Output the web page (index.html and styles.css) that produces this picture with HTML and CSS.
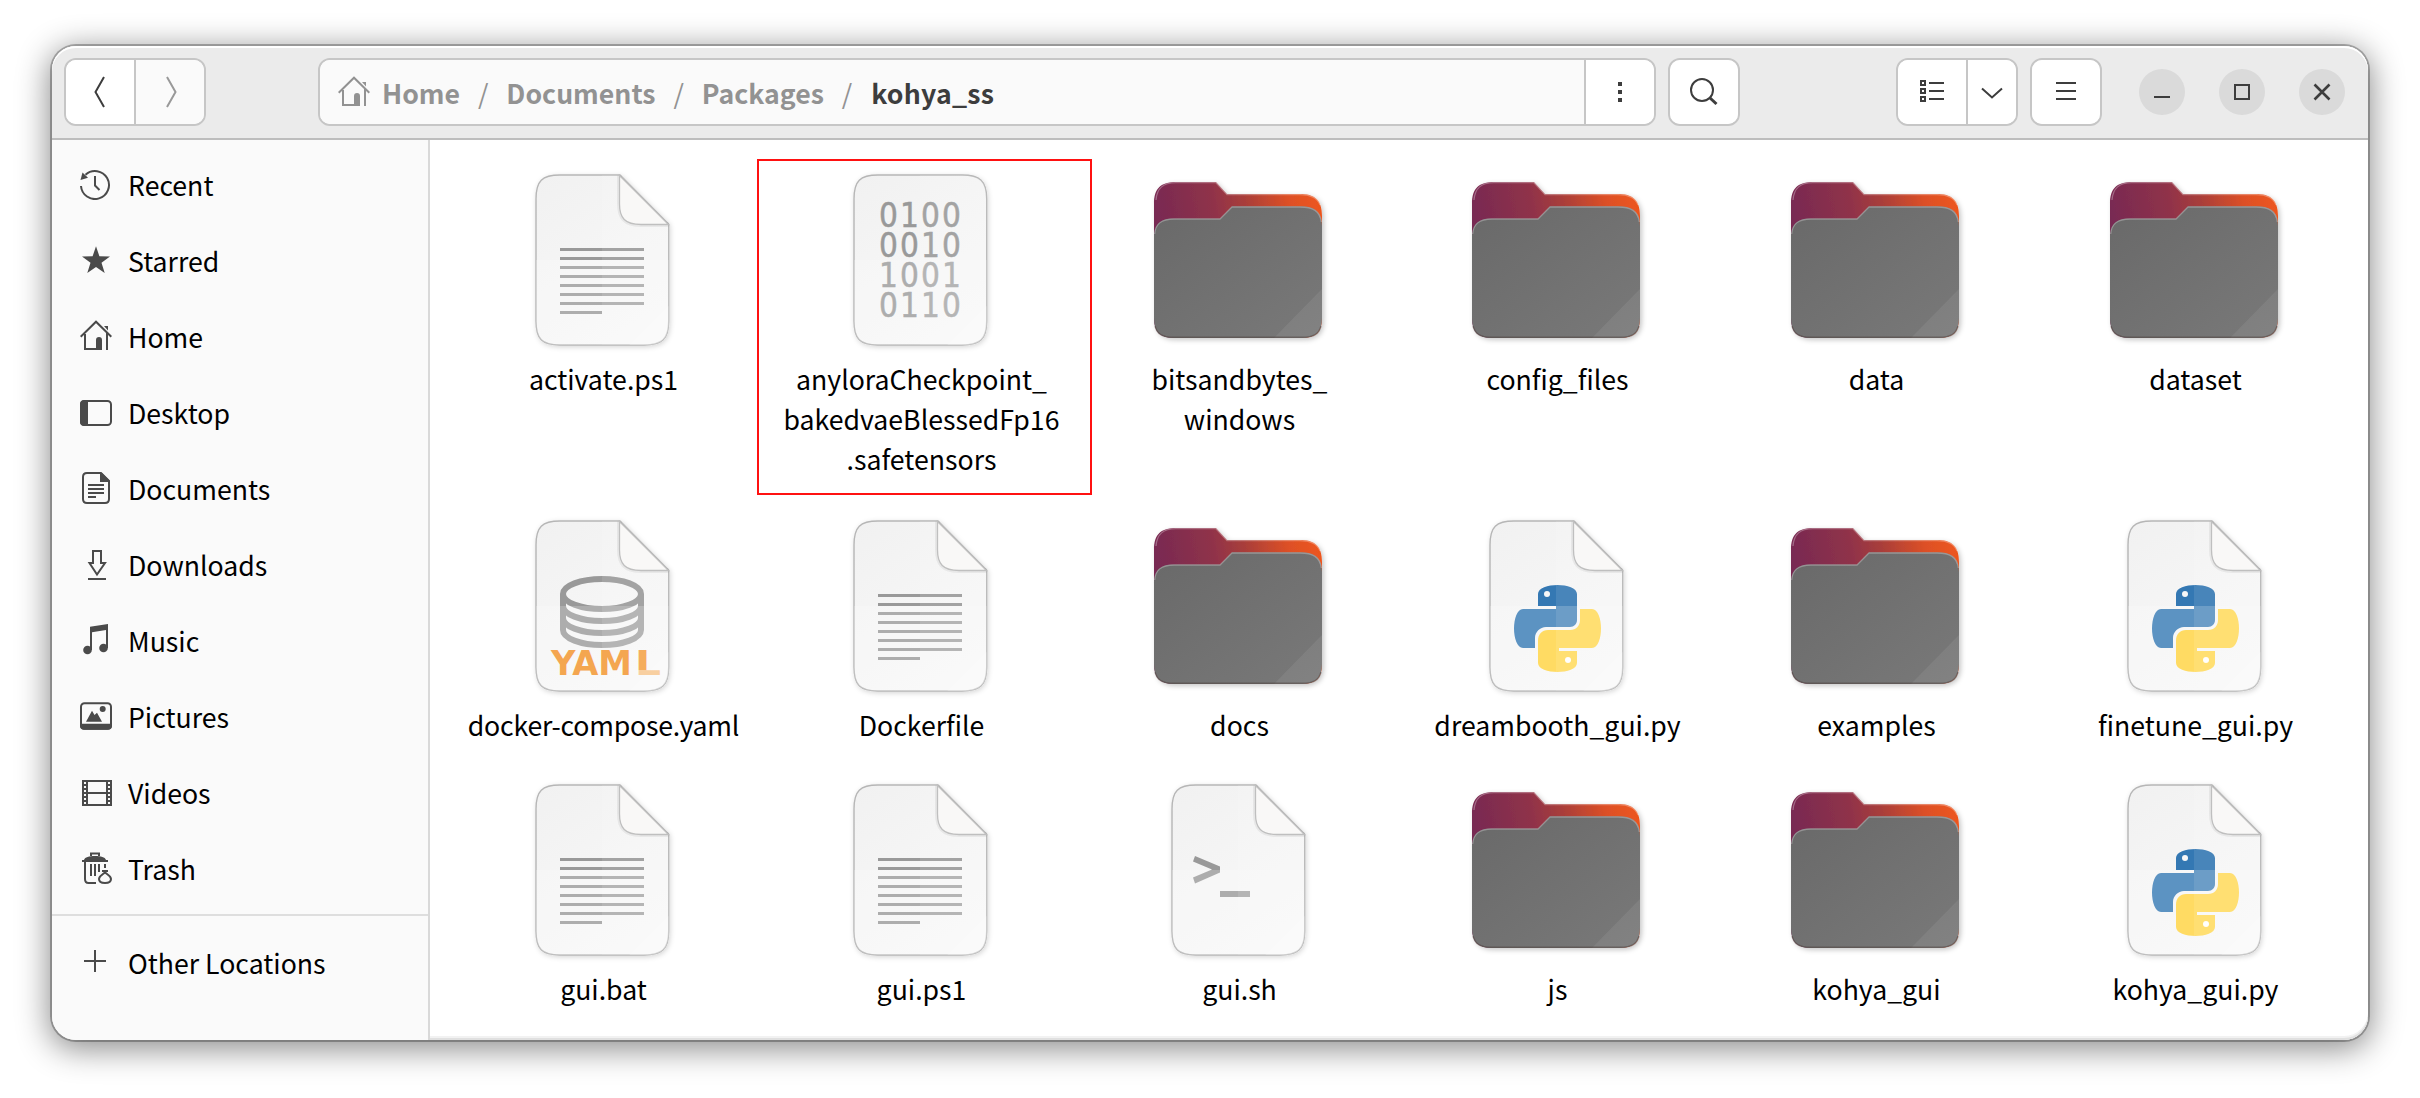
FILE: index.html
```html
<!DOCTYPE html>
<html lang="en">
<head>
<meta charset="utf-8">
<title>kohya_ss</title>
<link rel="stylesheet" href="styles.css">
</head>
<body>
<svg class="sprite" width="0" height="0" aria-hidden="true">
  <defs>
    <linearGradient id="paper" x1="0" y1="0" x2="0.5" y2="1">
      <stop offset="0" stop-color="#f1f1f1"/><stop offset="1" stop-color="#f8f8f8"/>
    </linearGradient>
    <linearGradient id="folder-back" x1="12" y1="62" x2="180" y2="30" gradientUnits="userSpaceOnUse">
      <stop offset="0" stop-color="#772953"/><stop offset=".36" stop-color="#8f324a"/><stop offset=".55" stop-color="#a93e3a"/><stop offset=".8" stop-color="#dd5026"/><stop offset="1" stop-color="#ee561e"/>
    </linearGradient>
    <linearGradient id="folder-front" x1="0" y1="0" x2="1" y2="1">
      <stop offset="0" stop-color="#696969"/><stop offset="1" stop-color="#797979"/>
    </linearGradient>
    <linearGradient id="yaml-l" x1="0" y1="141" x2="0" y2="165" gradientUnits="userSpaceOnUse">
      <stop offset=".8" stop-color="#f5ad5e"/><stop offset=".8" stop-color="#f8cfa0"/>
    </linearGradient>
    <filter id="soft" x="-10%" y="-10%" width="125%" height="125%">
      <feDropShadow dx="1" dy="1.5" stdDeviation="2.5" flood-color="#000" flood-opacity=".16"/>
    </filter>
    <filter id="folder-soft" x="-10%" y="-10%" width="125%" height="125%">
      <feDropShadow dx="2" dy="2" stdDeviation="2.5" flood-color="#000" flood-opacity=".22"/>
    </filter>
    <clipPath id="page-clip"><path d="M114 11H54C36 11 30 17 30 35V157C30 175 36 181 54 181H138C156 181 162.700 175 162.700 157V60Z"/></clipPath>
    <clipPath id="sheet-clip"><path d="M54 11H138C156 11 162.700 17 162.700 35V157C162.700 175 156 181 138 181H54C36 181 30 175 30 157V35C30 17 36 11 54 11Z"/></clipPath>
  </defs>

  <symbol id="sheen" viewBox="0 0 192 192">
    <path d="M96 0H192V192H96Z" fill="#fff" opacity=".1"/>
    <path d="M0 96H192V192H0Z" fill="#fff" opacity=".2"/>
    <path d="M192 113 112 192H192Z" fill="#fff" opacity=".2"/>
  </symbol>

  <symbol id="page" viewBox="0 0 192 192">
    <path d="M114 11H54C36 11 30 17 30 35V157C30 175 36 181 54 181H138C156 181 162.700 175 162.700 157V60Z" fill="url(#paper)" stroke="#b6b6b6" stroke-width="1.400" filter="url(#soft)"/>
    <path d="M113.500 11.500V40C113.500 54 119 60.500 135 60.500H162.500" fill="none" stroke="#000" stroke-opacity=".06" stroke-width="5"/>
    <path d="M113.500 11.500V40C113.500 54 119 60.500 135 60.500H162.500Z" fill="#f9f8f7" stroke="#b8b8b8" stroke-width="1.300"/>
  </symbol>

  <symbol id="text-file" viewBox="0 0 192 192">
    <use href="#page"/>
    <path d="M54 85.500H138M54 94.500H138M54 103.500H138M54 112.500H138M54 121.500H138M54 130.500H138M54 139.500H138M54 148.500H96" stroke="#999" stroke-width="3"/>
    <use href="#sheen" clip-path="url(#page-clip)"/>
  </symbol>

  <symbol id="shell-file" viewBox="0 0 192 192">
    <use href="#page"/>
    <path d="M53 82 78 92.500V98.500L53 109.500 51 103.500 70 95.500 51 87.500ZM78 117H108V123H78Z" fill="#999"/>
    <use href="#sheen" clip-path="url(#page-clip)"/>
  </symbol>

  <symbol id="python-file" viewBox="0 0 192 192">
    <use href="#page"/>
    <path d="M78 96V84C78 78 88 75 97.500 75S117 78 117 84V110C117 114 114 117 110 117H86C80 117 75 122 75 128V138H63C57 138 54 128 54 118.500S57 99 63 99H96V96Z" fill="#3478b3"/>
    <path d="M120 99H132C138 99 141 109 141 118.500S138 138 132 138H99V141H117V153C117 159 107 162 97.500 162S78 159 78 153V131C78 124 82 120 88 120H110C116 120 120 116 120 110Z" fill="#ffd33c"/>
    <circle cx="87" cy="84" r="3" fill="#f7f7f7"/><circle cx="108" cy="150" r="3" fill="#fff"/>
    <use href="#sheen" clip-path="url(#page-clip)"/>
  </symbol>

  <symbol id="folder" viewBox="0 0 192 192">
    <path d="M12 80V40C12 24 19 18 34 18H74L85 30H158C172 30 180 35 180 52V154C180 168 174 174 160 174H32C18 174 12 168 12 154Z" fill="url(#folder-back)" filter="url(#folder-soft)"/>
    <path d="M14 36C15 24 21 18.700 34 18.700H74L85 30.700H158C168 30.700 175 33 178 41" fill="none" stroke="#fff" stroke-opacity=".3" stroke-width="1.300"/>
    <path d="M12 74C12 60 18 54.500 32 54.500H78L90 42.300H158C172 42.300 180 47 180 62V154C180 168 174 174 160 174H32C18 174 12 168 12 154Z" fill="url(#folder-front)"/>
    <path d="M12.700 70C13.500 60 19 55 32 55H78L90 43H158C171 43 178 47 179.300 58" fill="none" stroke="#fff" stroke-opacity=".28" stroke-width="1.300"/>
    <path d="M180 125V154C180 168 174 174 160 174H132Z" fill="#fff" opacity=".07"/>
    <path d="M13 162C15 170 20 173.300 32 173.300H160C172 173.300 177 170 179 162" fill="none" stroke="#4a3a36" stroke-opacity=".45" stroke-width="1.400"/>
  </symbol>

  <symbol id="home" viewBox="0 0 32 32">
    <path d="M.7 16.700 16 1.700 31.300 16.700M5 14V29H17M27 13V30" fill="none" stroke="currentColor" stroke-width="2"/>
    <path d="M16 30V20C16 18 17 17 19 17S22 18 22 20V30ZM24 6H28V10.500Z" fill="currentColor"/>
  </symbol>
</svg>

<main class="window">
  <header class="headerbar">
    <div class="group nav">
      <button class="btn"><svg width="32" height="32" viewBox="0 0 32 32"><path d="M20 1 11.500 16 20 31" class="line"/></svg></button>
      <button class="btn disabled"><svg width="32" height="32" viewBox="0 0 32 32"><path d="M13 1 21.500 16 13 31" class="line"/></svg></button>
    </div>
    <div class="group pathbar">
      <nav class="crumbs">
        <svg class="crumb-home" width="32" height="32"><use href="#home"/></svg>
        <span class="crumb">Home</span><span class="sep">/</span>
        <span class="crumb">Documents</span><span class="sep">/</span>
        <span class="crumb">Packages</span><span class="sep">/</span>
        <span class="crumb current">kohya_ss</span>
      </nav>
      <button class="btn"><svg width="32" height="32" viewBox="0 0 32 32"><path d="M14 6h4v4h-4zM14 14h4v4h-4zM14 22h4v4h-4z" fill="currentColor"/></svg></button>
    </div>
    <div class="group search">
      <button class="btn"><svg width="32" height="32" viewBox="0 0 32 32"><circle cx="14" cy="14" r="11" class="line"/><path d="M21.500 21.500 28.500 28" class="line thick"/></svg></button>
    </div>
    <div class="group view">
      <button class="btn"><svg width="32" height="32" viewBox="0 0 32 32"><path d="M5 5h4v4h-4zM5 13h4v4h-4zM5 21h4v4h-4zM13 7H28M13 15H28M13 23H28" class="line"/></svg></button>
      <button class="btn narrow"><svg width="32" height="32" viewBox="0 0 32 32"><path d="M6 12.500 16 21.500 26 12.500" class="line"/></svg></button>
    </div>
    <div class="group menu">
      <button class="btn"><svg width="32" height="32" viewBox="0 0 32 32"><path d="M6 7H26M6 15H26M6 23H26" class="line"/></svg></button>
    </div>
    <div class="controls">
      <button class="ctl"><svg width="32" height="32" viewBox="0 0 32 32"><path d="M8 21H24" class="line"/></svg></button>
      <button class="ctl"><svg width="32" height="32" viewBox="0 0 32 32"><path d="M9 9H23V23H9Z" class="line"/></svg></button>
      <button class="ctl"><svg width="32" height="32" viewBox="0 0 32 32"><path d="M8.500 8.500 23.500 23.500M23.500 8.500 8.500 23.500" class="line close"/></svg></button>
    </div>
  </header>

  <div class="body">
    <aside class="sidebar">
      <ul class="places">
        <li class="place"><svg width="32" height="32" viewBox="0 0 32 32"><path d="M1 18A14 14 0 1 0 5.500 6.700M15 8V17.500L19.500 22" class="line"/><path d="M.5 12 2.500 4.500 8 9.700Z" fill="currentColor"/></svg><span>Recent</span></li>
        <li class="place"><svg width="32" height="32" viewBox="0 0 32 32"><path d="M16 2.300 19.400 12.300 30 12.500 21.500 18.800 24.700 29 16 23 7.300 29 10.500 18.800 2 12.500 12.600 12.300Z" fill="currentColor"/></svg><span>Starred</span></li>
        <li class="place"><svg width="32" height="32"><use href="#home"/></svg><span>Home</span></li>
        <li class="place"><svg width="32" height="32" viewBox="0 0 32 32"><rect x="1" y="5" width="30" height="24" rx="3.500" class="line"/><path d="M8 4H4.500C1.500 4 0 5.500 0 8V26C0 28.500 1.500 30 4.500 30H8Z" fill="currentColor"/></svg><span>Desktop</span></li>
        <li class="place"><svg width="32" height="32" viewBox="0 0 32 32"><path d="M21 1H7C4.500 1 3 2.500 3 5V27C3 29.500 4.500 31 7 31H25C27.500 31 29 29.500 29 27V9ZM8 13H24M8 17H24M8 21H24M8 25H16" class="line"/><path d="M20 1H22L30 9V10H20Z" fill="currentColor"/></svg><span>Documents</span></li>
        <li class="place"><svg width="32" height="32" viewBox="0 0 32 32"><path d="M13 15V3H21V15H25L17 26.500 9.500 15ZM8 31H26" class="line"/></svg><span>Downloads</span></li>
        <li class="place"><svg width="32" height="32" viewBox="0 0 32 32"><path d="M10 2.700 28 0V24H26V6L12 8.300V26H10Z" fill="currentColor"/><circle cx="7.500" cy="26" r="4.300" fill="currentColor"/><circle cx="23.500" cy="24" r="4.300" fill="currentColor"/></svg><span>Music</span></li>
        <li class="place"><svg width="32" height="32" viewBox="0 0 32 32"><rect x="1" y="3.300" width="30" height="25.500" rx="3.500" class="line"/><path d="M0 23.700H32V26C32 28.500 30.500 29.700 28 29.700H4C1.500 29.700 0 28.500 0 26ZM6 21.700 12 10.700 14.500 15 17 12.700 22 21.700Z" fill="currentColor"/><circle cx="22.700" cy="9" r="3" fill="currentColor"/></svg><span>Pictures</span></li>
        <li class="place"><svg width="32" height="32" viewBox="0 0 32 32"><path d="M3 4V30M7 4V30M27 4V30M31 4V30M3 5H31M7 17H27M3 29H31M3 9H7M3 13H7M3 17H7M3 21H7M3 25H7M27 9H31M27 13H31M27 17H31M27 21H31M27 25H31" class="line"/></svg><span>Videos</span></li>
        <li class="place"><svg width="32" height="32" viewBox="0 0 32 32"><path d="M11 4V1.500H19V4M5 9V27C5 29.500 6 31 8.500 31H16M11 12V24M15 12V24M19 12V20M25 12V16" class="line"/><path d="M2 8H28V10H2ZM4 8C5 5 9 4 15 4S25 5 26 8ZM22 18H28V20H26.500L25 22 23.500 20H22Z" fill="currentColor"/><path d="M25 20.500C22 23 19 24 19 27S21 31 25 31 31 30 31 27 28 23 25 20.500Z" class="line"/></svg><span>Trash</span></li>
      </ul>
      <ul class="places other">
        <li class="place"><svg width="32" height="32" viewBox="0 0 32 32"><path d="M15 4V26M4 15H26" class="line"/></svg><span>Other Locations</span></li>
      </ul>
    </aside>

    <section class="files">
      <figure class="file"><svg class="icon"><use href="#text-file"/></svg><figcaption>activate.ps1</figcaption></figure>
      <figure class="file marked">
        <svg class="icon" viewBox="0 0 192 192">
          <path d="M54 11H138C156 11 162.700 17 162.700 35V157C162.700 175 156 181 138 181H54C36 181 30 175 30 157V35C30 17 36 11 54 11Z" fill="url(#paper)" stroke="#b6b6b6" stroke-width="1.400" filter="url(#soft)"/>
          <g class="bits">
            <text x="64.500 85.500 106.500 127.500" y="63">0100</text>
            <text x="64.500 85.500 106.500 127.500" y="93">0010</text>
            <text x="64.500 85.500 106.500 127.500" y="123">1001</text>
            <text x="64.500 85.500 106.500 127.500" y="153">0110</text>
          </g>
          <use href="#sheen" clip-path="url(#sheet-clip)"/>
        </svg>
        <figcaption>anyloraCheckpoint_<br>bakedvaeBlessedFp16<br>.safetensors</figcaption>
      </figure>
      <figure class="file"><svg class="icon"><use href="#folder"/></svg><figcaption>bitsandbytes_<br>windows</figcaption></figure>
      <figure class="file"><svg class="icon"><use href="#folder"/></svg><figcaption>config_files</figcaption></figure>
      <figure class="file"><svg class="icon"><use href="#folder"/></svg><figcaption>data</figcaption></figure>
      <figure class="file"><svg class="icon"><use href="#folder"/></svg><figcaption>dataset</figcaption></figure>

      <figure class="file">
        <svg class="icon" viewBox="0 0 192 192">
          <use href="#page"/>
          <g fill="none" stroke="#999" stroke-width="6">
            <ellipse cx="96" cy="84" rx="39" ry="15"/>
            <path d="M57 84V120A39 15 0 0 0 135 120V84M57 96A39 15 0 0 0 135 96M57 108A39 15 0 0 0 135 108"/>
          </g>
          <use href="#sheen" clip-path="url(#page-clip)"/>
          <g class="yaml-word">
            <text x="45" y="165" textLength="81" lengthAdjust="spacingAndGlyphs">YAM</text>
            <text x="129" y="165" textLength="26" lengthAdjust="spacingAndGlyphs" fill="url(#yaml-l)">L</text>
          </g>
        </svg>
        <figcaption class="tight">docker-compose.yaml</figcaption>
      </figure>
      <figure class="file"><svg class="icon"><use href="#text-file"/></svg><figcaption>Dockerfile</figcaption></figure>
      <figure class="file"><svg class="icon"><use href="#folder"/></svg><figcaption>docs</figcaption></figure>
      <figure class="file"><svg class="icon"><use href="#python-file"/></svg><figcaption>dreambooth_gui.py</figcaption></figure>
      <figure class="file"><svg class="icon"><use href="#folder"/></svg><figcaption>examples</figcaption></figure>
      <figure class="file"><svg class="icon"><use href="#python-file"/></svg><figcaption>finetune_gui.py</figcaption></figure>

      <figure class="file"><svg class="icon"><use href="#text-file"/></svg><figcaption>gui.bat</figcaption></figure>
      <figure class="file"><svg class="icon"><use href="#text-file"/></svg><figcaption>gui.ps1</figcaption></figure>
      <figure class="file"><svg class="icon"><use href="#shell-file"/></svg><figcaption>gui.sh</figcaption></figure>
      <figure class="file"><svg class="icon"><use href="#folder"/></svg><figcaption>js</figcaption></figure>
      <figure class="file"><svg class="icon"><use href="#folder"/></svg><figcaption>kohya_gui</figcaption></figure>
      <figure class="file"><svg class="icon"><use href="#python-file"/></svg><figcaption>kohya_gui.py</figcaption></figure>
    </section>
  </div>
</main>
</body>
</html>
```
FILE: styles.css
```css
*, *::after { box-sizing: border-box; }

body {
  margin: 0;
  height: 1098px;
  padding: 46px 52px 58px;
  background: #fff;
  font: 26.67px/40px "Noto Sans CJK SC", "Noto Sans", sans-serif;
  color: #000;
  overflow: hidden;
}

.sprite { position: absolute; }

.window {
  display: flex;
  flex-direction: column;
  width: 2316px;
  height: 994px;
  border-radius: 24px;
  background: #fff;
  box-shadow: 0 0 0 2px rgba(0, 0, 0, .27), 0 6px 32px 3px rgba(0, 0, 0, .46);
}

/* header bar */
.headerbar {
  display: flex;
  align-items: center;
  height: 94px;
  padding: 0 23px 0 12px;
  border-bottom: 2px solid #bdbdbd;
  border-radius: 24px 24px 0 0;
  background: #ebebeb;
  box-shadow: inset 0 2px #fff;
  color: #3d3d3d;
}

.group {
  display: flex;
  height: 68px;
  border: 2px solid #c6c6c6;
  border-radius: 12px;
  background: #fff;
  overflow: hidden;
}

.btn, .ctl {
  display: flex;
  align-items: center;
  justify-content: center;
  margin: 0;
  padding: 0;
  border: 0;
  color: inherit;
}

.btn { width: 68px; background: #fff; }
.btn + .btn, .crumbs + .btn { width: 70px; border-left: 2px solid #c6c6c6; }
.btn.narrow { width: 50px; }
.btn.disabled { background: #fafafa; color: #999; }

.pathbar { width: 1338px; margin-left: 112px; }
.search { margin-left: 12px; }
.view { margin-left: 156px; }
.menu { margin-left: 12px; }

.crumbs {
  display: flex;
  align-items: center;
  flex: 1;
  padding-left: 18px;
  background: #fafafa;
  color: #929292;
  white-space: nowrap;
}

.crumb-home { margin-right: 12px; }
.crumb, .sep { padding-top: 2px; }
.crumb { font-weight: 700; }
.crumb.current { padding-left: 1px; color: #3d3d3d; letter-spacing: .25px; }
.sep { width: 46.3px; text-align: center; }

.controls { display: flex; gap: 34px; margin-left: 37px; }
.ctl { width: 46px; height: 46px; border-radius: 50%; background: #dadada; }

.line { fill: none; stroke: currentColor; stroke-width: 2; }
.line.thick { stroke-width: 3; }
.line.close { stroke-width: 2.6; }

/* panes */
.body { display: flex; flex: 1; min-height: 0; }

.sidebar {
  width: 378px;
  border-right: 2px solid #d9d9d9;
  border-bottom-left-radius: 24px;
  background: #fafafa;
}

.places { margin: 0; padding: 6px 0 8px; list-style: none; }
.places.other { border-top: 2px solid #dedede; padding-top: 8px; }

.place {
  display: flex;
  align-items: center;
  gap: 16px;
  height: 76px;
  padding-left: 28px;
}

.place svg { color: #4a4a4a; }
.place span { padding-top: 2px; }

.files {
  display: grid;
  flex: 1;
  grid-template-columns: repeat(4, 318px) 320px 318px;
  grid-template-rows: 346px 264px 264px;
  padding: 24px 0 0 13px;
  border-bottom-right-radius: 24px;
  box-shadow: inset 0 -2px #e0e0e0, inset 0 -4px #f2f2f2;
  overflow: hidden;
}

.file {
  position: relative;
  display: flex;
  flex-direction: column;
  align-items: center;
  margin: 0;
}

.icon { width: 192px; height: 192px; }

.file figcaption {
  padding: 3px 0 0 3px;
  text-align: center;
  white-space: nowrap;
}

.file figcaption.tight { letter-spacing: -.2px; }

.marked::after {
  content: "";
  position: absolute;
  left: -4px;
  top: -5px;
  width: 335px;
  height: 336px;
  border: 2px solid #f11;
}

/* lettering on document icons */
.bits text {
  font: 33px "DejaVu Sans Condensed", "DejaVu Sans", sans-serif;
  fill: #999;
  stroke: #999;
  stroke-width: .5px;
  text-anchor: middle;
}

.yaml-word { fill: #f4a650; }
.yaml-word text { font: bold 33px "DejaVu Sans", sans-serif; }
```
